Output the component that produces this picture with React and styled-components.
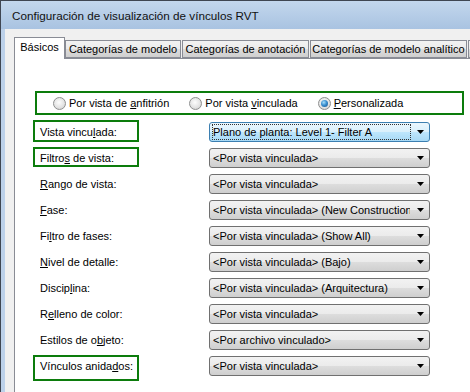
import styled, { createGlobalStyle } from "styled-components";

const GlobalStyle = createGlobalStyle`
  html, body {
    margin: 0;
    padding: 0;
    background: #f0f0f0;
  }
  body {
    font-family: "Liberation Sans", Arial, sans-serif;
    font-size: 11px;
    color: #000;
  }
`

const tabs = [
    { text: "Básicos", width: 51, active: true },
    { text: "Categorías de modelo", width: 116 },
    { text: "Categorías de anotación", width: 127 },
    { text: "Categorías de modelo analítico", width: 157 },
    { text: "", width: 40 },
]

const radios = [
    { pre: "Por vista de ", key: "a", post: "nfitrión" },
    { pre: "Por vista ", key: "v", post: "inculada" },
    { pre: "", key: "P", post: "ersonalizada", checked: true },
]

// label split as [before, mnemonic letter, after]
const rows = [
    { label: ["Vista vincu", "l", "ada:"], value: "Plano de planta: Level 1- Filter A", focused: true, mark: { top: 1, h: 22 } },
    { label: ["Filtro", "s", " de vista:"], value: "<Por vista vinculada>", mark: { top: 2, h: 20 } },
    { label: ["", "R", "ango de vista:"], value: "<Por vista vinculada>" },
    { label: ["", "F", "ase:"], value: "<Por vista vinculada> (New Construction" },
    { label: ["Fi", "l", "tro de fases:"], value: "<Por vista vinculada> (Show All)" },
    { label: ["", "N", "ivel de detalle:"], value: "<Por vista vinculada> (Bajo)" },
    { label: ["Discip", "l", "ina:"], value: "<Por vista vinculada> (Arquitectura)" },
    { label: ["R", "e", "lleno de color:"], value: "<Por vista vinculada>" },
    { label: ["Estilos de o", "b", "jeto:"], value: "<Por archivo vinculado>" },
    { label: ["Vínculos anida", "d", "os:"], value: "<Por vista vinculada>", mark: { top: 2, h: 26 } },
]

function Arrow() {
    return (
        <svg width="7" height="4" viewBox="0 0 7 4">
            <path d="M0 0 H7 L3.5 4 Z" fill="#000" />
        </svg>
    )
}

function App() {
    return (
        <Window>
            <GlobalStyle />
            <TitleBar>Configuración de visualización de vínculos RVT</TitleBar>
            <Body>
                <TabStrip>
                    {tabs.map((tab, index) => (
                        <Tab key={index} $active={tab.active} $width={tab.width}>{tab.text}</Tab>
                    ))}
                </TabStrip>
                <Panel>
                    <RadioBox>
                        {radios.map((r, index) => (
                            <RadioItem key={index}>
                                <RadioCircle $checked={r.checked} />
                                <span>{r.pre}<Key>{r.key}</Key>{r.post}</span>
                            </RadioItem>
                        ))}
                    </RadioBox>
                    <Rows>
                        {rows.map((row, index) => {
                            const top = row.mark ? row.mark.top : 3
                            const h = row.mark ? row.mark.h : 20
                            return (
                                <Row key={index}>
                                    <LabelCell>
                                        <Label $marked={!!row.mark} $top={top} $h={h}>
                                            {row.label[0]}<Key>{row.label[1]}</Key>{row.label[2]}
                                        </Label>
                                    </LabelCell>
                                    <Select $focused={row.focused}>
                                        <Value $focused={row.focused}>{row.value}</Value>
                                        <ArrowZone><Arrow /></ArrowZone>
                                    </Select>
                                </Row>
                            )
                        })}
                    </Rows>
                </Panel>
            </Body>
        </Window>
    )
}

export default App


const Window = styled.div`
    width: 470px;
    height: 392px;
    overflow: hidden;
    display: flex;
    flex-direction: column;
    border-top: 1px solid #3f4652;
    border-left: 1px solid #3f4652;
    box-sizing: border-box;
    background: #f0f0f0;
`

const TitleBar = styled.div`
    height: 28px;
    flex-shrink: 0;
    display: flex;
    align-items: center;
    padding-left: 11px;
    background: linear-gradient(#c3d7ed, #a9c3e1);
    font-size: 11.7px;
    color: #111;
`

const Body = styled.div`
    flex: 1;
    display: flex;
    flex-direction: column;
    border-left: 4px solid #bcd1ea;
    padding: 8px 0 0 9px;
    min-height: 0;
`

const TabStrip = styled.div`
    height: 21px;
    display: flex;
    align-items: flex-end;
    gap: 1px;
    flex-shrink: 0;
`

const Tab = styled.div`
    position: relative;
    z-index: ${props => props.$active ? 1 : 0};
    width: ${props => props.$width}px;
    flex-shrink: 0;
    box-sizing: border-box;
    height: ${props => props.$active ? 22 : 18}px;
    margin-bottom: ${props => props.$active ? -1 : 0}px;
    margin-right: ${props => props.$active ? -1 : 0}px;
    border: 1px solid #898c95;
    border-bottom: ${props => props.$active ? "none" : "1px solid #898c95"};
    background: ${props => props.$active
        ? "#fff"
        : "linear-gradient(#f2f2f2 0%, #ebebeb 50%, #dddddd 50%, #cfcfcf 100%)"};
    display: flex;
    align-items: center;
    justify-content: center;
    padding-bottom: ${props => props.$active ? 3 : 0}px;
    white-space: nowrap;
    overflow: hidden;
`

const Panel = styled.div`
    flex: 1;
    background: #fff;
    border-top: 1px solid #898c95;
    border-left: 1px solid #898c95;
    padding: 32px 0 0 20px;
`

const RadioBox = styled.div`
    width: 429px;
    height: 24px;
    box-sizing: border-box;
    border: 2px solid #0c7c0c;
    display: flex;
    align-items: center;
    gap: 20px;
    padding-left: 16px;
`

const RadioItem = styled.div`
    display: flex;
    align-items: center;
    gap: 3px;
    white-space: nowrap;
`

const RadioCircle = styled.span`
    width: 13px;
    height: 13px;
    box-sizing: border-box;
    border-radius: 50%;
    border: 1px solid #8e8f8f;
    background: radial-gradient(circle at 45% 40%, #fdfdfd 0%, #e4e4e4 55%, #c9c9c9 100%);
    display: flex;
    align-items: center;
    justify-content: center;

    &::after {
        content: "";
        display: ${props => props.$checked ? "block" : "none"};
        width: 7px;
        height: 7px;
        border-radius: 50%;
        background: radial-gradient(circle at 40% 35%, #a9e0fb 0%, #3a8fd0 45%, #174f86 100%);
    }
`

const Key = styled.span`
    text-decoration: underline;
`

const Rows = styled.div`
    margin: 4px 0 0 -2px;
    display: flex;
    flex-direction: column;
`

const Row = styled.div`
    height: 26px;
    display: flex;
    align-items: flex-start;
`

const LabelCell = styled.div`
    width: 176px;
    flex-shrink: 0;
`

const Label = styled.div`
    width: 106px;
    height: ${props => props.$h}px;
    margin-top: ${props => props.$top}px;
    box-sizing: border-box;
    border: 2px solid ${props => props.$marked ? "#0c7c0c" : "transparent"};
    padding: ${props => 4 - props.$top}px 0 0 5px;
    line-height: 14px;
    white-space: nowrap;
`

const Select = styled.div`
    margin-top: 3px;
    width: 221px;
    height: 20px;
    box-sizing: border-box;
    border: 1px solid ${props => props.$focused ? "#3c7fb1" : "#707070"};
    border-radius: 3px;
    background: ${props => props.$focused
        ? "linear-gradient(#eaf6fd 0%, #d9f0fc 50%, #bee6fd 50%, #a7d9f5 100%)"
        : "linear-gradient(#f2f2f2 0%, #ebebeb 50%, #dddddd 50%, #cfcfcf 100%)"};
    display: flex;
    align-items: center;
`

const Value = styled.div`
    flex: 1;
    min-width: 0;
    height: 16px;
    box-sizing: border-box;
    margin-left: 2px;
    border: 1px dotted ${props => props.$focused ? "#333" : "transparent"};
    line-height: 14px;
    white-space: nowrap;
    overflow: hidden;
`

const ArrowZone = styled.div`
    width: 18px;
    flex-shrink: 0;
    display: flex;
    align-items: center;
    justify-content: center;
`
